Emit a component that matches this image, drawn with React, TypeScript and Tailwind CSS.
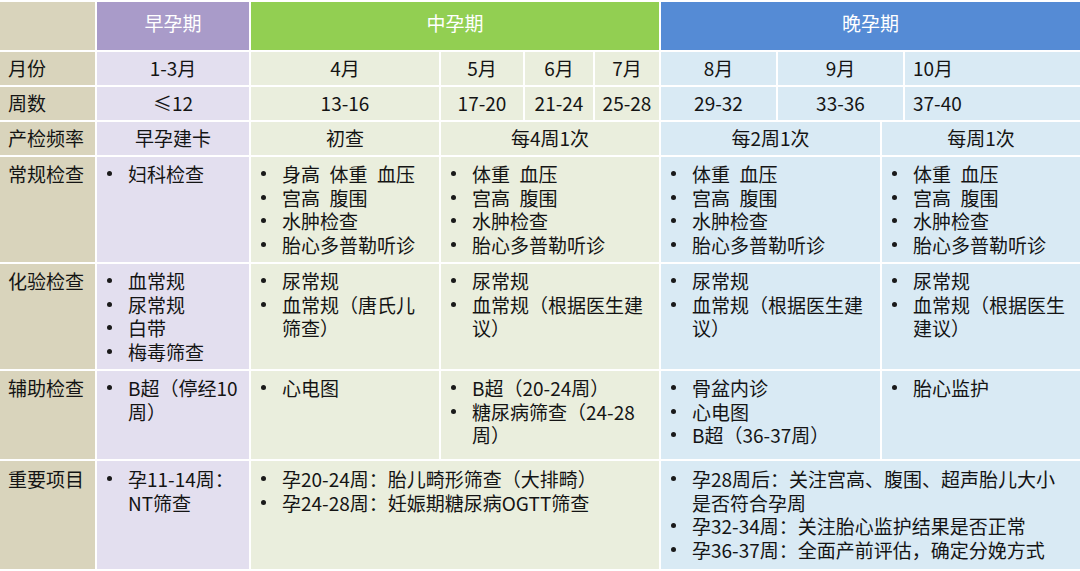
import React from "react";

const LABEL = "bg-[#d9d4bc]";
const P_HEAD = "bg-[#a99bc9]";
const G_HEAD = "bg-[#92cf52]";
const B_HEAD = "bg-[#558bd5]";
const P = "bg-[#e3dfef]";
const G = "bg-[#eaeedd]";
const B = "bg-[#d9eaf4]";

type Item = React.ReactNode;

function List({ items }: { items: Item[] }) {
  return (
    <ul className="pl-[10px] pt-[5px] pr-[2px]">
      {items.map((it, i) => (
        <li key={i} className="flex leading-[23.5px]">
          <span className="w-[21px] h-[23.5px] shrink-0 flex items-center">
            <span className="block w-[5px] h-[5px] rounded-full bg-[#1a1a1a]" />
          </span>
          <span>{it}</span>
        </li>
      ))}
    </ul>
  );
}

function Label({ children }: { children: React.ReactNode }) {
  return (
    <div className={`${LABEL} pl-[8px] pt-[5px] leading-[23.5px]`}>{children}</div>
  );
}

function Center({ bg, span, children }: { bg: string; span?: string; children: React.ReactNode }) {
  return (
    <div className={`${bg} ${span ?? ""} flex items-center justify-center`}>{children}</div>
  );
}

const SP = "\u2002";
const routine = [`体重${SP}血压`, `宫高${SP}腹围`, "水肿检查", "胎心多普勒听诊"];

export default function App() {
  return (
    <div className="w-[1080px] h-[571px] bg-white pt-[2px] overflow-hidden font-['Noto_Sans_CJK_SC','Noto_Sans',sans-serif] text-[19px] text-[#141414]">
      <div className="grid grid-cols-[95px_152px_188px_82px_68px_64px_115px_102px_21px_175px] grid-rows-[48px_33px_33px_33px_105px_105px_88px_108px] gap-[2px]">
        {/* header */}
        <div className={LABEL} />
        <div className={`${P_HEAD} flex justify-center pt-[7px] text-white`}>早孕期</div>
        <div className={`${G_HEAD} col-span-4 flex justify-center pt-[7px] text-white`}>中孕期</div>
        <div className={`${B_HEAD} col-span-4 flex justify-center pt-[7px] text-white`}>晚孕期</div>

        {/* 月份 */}
        <div className={`${LABEL} flex items-center pl-[8px]`}>月份</div>
        <Center bg={P}>1-3月</Center>
        <Center bg={G}>4月</Center>
        <Center bg={G}>5月</Center>
        <Center bg={G}>6月</Center>
        <Center bg={G}>7月</Center>
        <Center bg={B}>8月</Center>
        <Center bg={B} span="col-span-2">9月</Center>
        <div className={`${B} flex items-center pl-[8px]`}>10月</div>

        {/* 周数 */}
        <div className={`${LABEL} flex items-center pl-[8px]`}>周数</div>
        <Center bg={P}>≤12</Center>
        <Center bg={G}>13-16</Center>
        <Center bg={G}>17-20</Center>
        <Center bg={G}>21-24</Center>
        <Center bg={G}>25-28</Center>
        <Center bg={B}>29-32</Center>
        <Center bg={B} span="col-span-2">33-36</Center>
        <div className={`${B} flex items-center pl-[8px]`}>37-40</div>

        {/* 产检频率 */}
        <div className={`${LABEL} flex items-center pl-[8px]`}>产检频率</div>
        <Center bg={P}>早孕建卡</Center>
        <Center bg={G}>初查</Center>
        <Center bg={G} span="col-span-3">每4周1次</Center>
        <Center bg={B} span="col-span-2">每2周1次</Center>
        <Center bg={B} span="col-span-2">每周1次</Center>

        {/* 常规检查 */}
        <Label>常规检查</Label>
        <div className={P}><List items={["妇科检查"]} /></div>
        <div className={G}><List items={[`身高${SP}体重${SP}血压`, `宫高${SP}腹围`, "水肿检查", "胎心多普勒听诊"]} /></div>
        <div className={`${G} col-span-3`}><List items={routine} /></div>
        <div className={`${B} col-span-2`}><List items={routine} /></div>
        <div className={`${B} col-span-2`}><List items={routine} /></div>

        {/* 化验检查 */}
        <Label>化验检查</Label>
        <div className={P}><List items={["血常规", "尿常规", "白带", "梅毒筛查"]} /></div>
        <div className={G}><List items={["尿常规", <>血常规（唐氏儿<br />筛查）</>]} /></div>
        <div className={`${G} col-span-3`}><List items={["尿常规", <>血常规（根据医生建<br />议）</>]} /></div>
        <div className={`${B} col-span-2`}><List items={["尿常规", <>血常规（根据医生建<br />议）</>]} /></div>
        <div className={`${B} col-span-2`}><List items={["尿常规", <>血常规（根据医生<br />建议）</>]} /></div>

        {/* 辅助检查 */}
        <Label>辅助检查</Label>
        <div className={P}><List items={[<>B超（停经10<br />周）</>]} /></div>
        <div className={G}><List items={["心电图"]} /></div>
        <div className={`${G} col-span-3`}><List items={["B超（20-24周）", <>糖尿病筛查（24-28<br />周）</>]} /></div>
        <div className={`${B} col-span-2`}><List items={["骨盆内诊", "心电图", "B超（36-37周）"]} /></div>
        <div className={`${B} col-span-2`}><List items={["胎心监护"]} /></div>

        {/* 重要项目 */}
        <div className={`${LABEL} pl-[8px] pt-[6px] leading-[23.5px]`}>重要项目</div>
        <div className={`${P} pt-[1px]`}><List items={[<>孕11-14周：<br />NT筛查</>]} /></div>
        <div className={`${G} col-span-4 pt-[1px]`}><List items={["孕20-24周：胎儿畸形筛查（大排畸）", "孕24-28周：妊娠期糖尿病OGTT筛查"]} /></div>
        <div className={`${B} col-span-4 pt-[1px]`}><List items={[<>孕28周后：关注宫高、腹围、超声胎儿大小<br />是否符合孕周</>, "孕32-34周：关注胎心监护结果是否正常", "孕36-37周：全面产前评估，确定分娩方式"]} /></div>
      </div>
    </div>
  );
}
